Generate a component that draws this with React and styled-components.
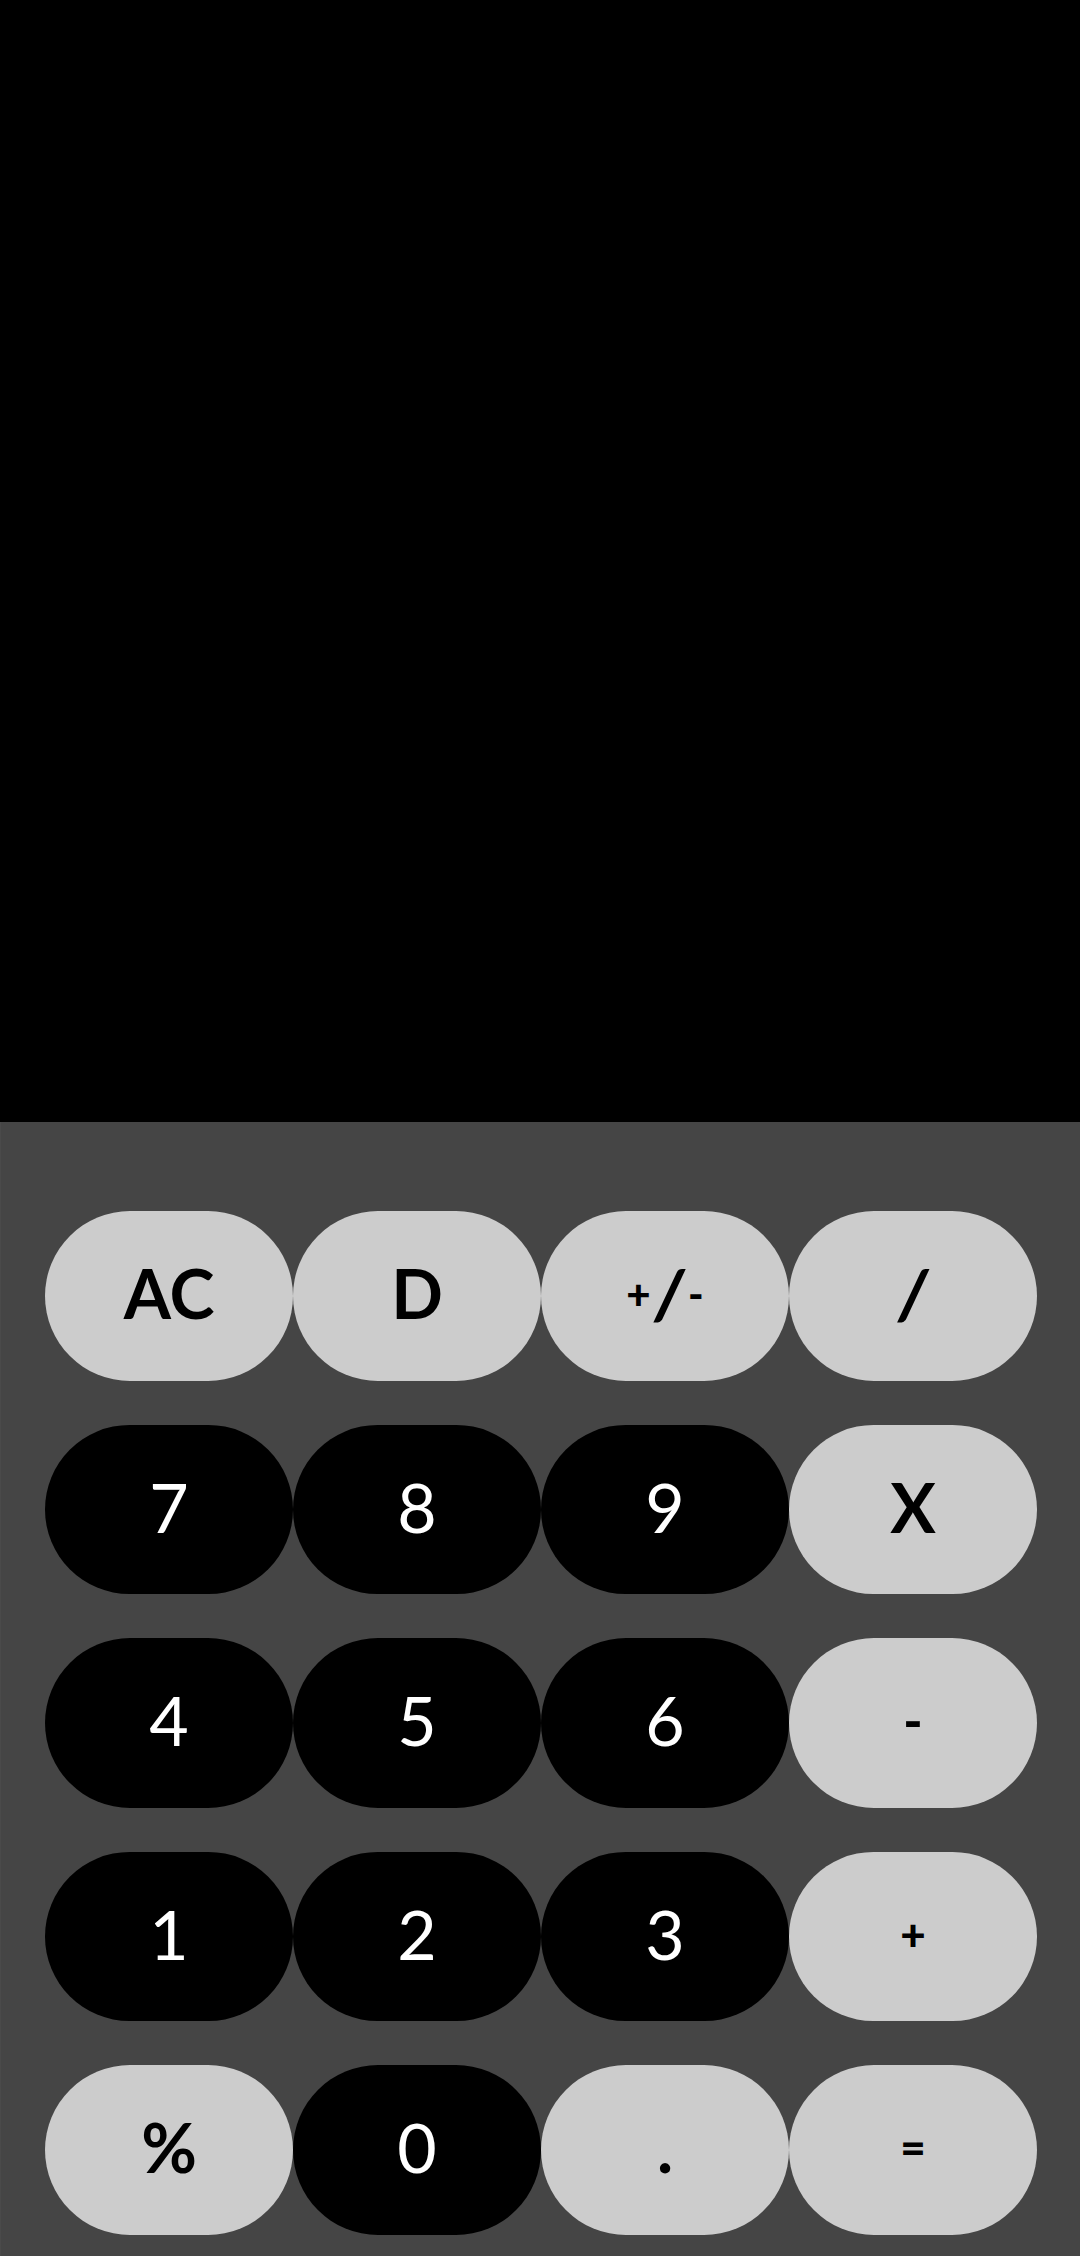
import React from "react";
import styled, { createGlobalStyle } from "styled-components";

const Global = createGlobalStyle`
  html, body { margin: 0; padding: 0; background: #000; }
  body { font-family: "Lato", "Noto Sans", sans-serif; }
  * { box-sizing: border-box; }
`;

const Page = styled.div`
  display: flex;
  flex-direction: column;
  width: 1080px;
  height: 2256px;
  overflow: hidden;
`;

const Screen = styled.div`
  height: 1122px;
  flex: none;
  background: #000;
`;

const Keypad = styled.div`
  flex: 1;
  background: #454545;
  border-left: 1px solid #4a4a4a;
  padding: 89px 43px 0 44px;
  display: grid;
  grid-template-columns: repeat(4, 248px);
  grid-auto-rows: 169.5px;
  row-gap: 44px;
`;

const Key = styled.button`
  border: none;
  margin: 0;
  padding: 0 0 5px;
  border-radius: 85px;
  display: flex;
  align-items: center;
  justify-content: center;
  font-family: "Lato", "Noto Sans", sans-serif;
  font-size: 68px;
  line-height: 1;
  background: ${(p) => (p.$tone === "light" ? "#cccccc" : "#000000")};
  color: ${(p) => (p.$tone === "light" ? "#000000" : "#ffffff")};
  font-weight: ${(p) => (p.$tone === "light" ? 700 : 400)};
`;

const Small = styled.span`
  font-size: ${(p) => p.$size || 44}px;
  font-weight: 900;
`;

const Slash = styled.span`
  font-style: italic;
  font-weight: 900;
  margin: 0 4px;
`;

const keys = [
  { label: "AC", tone: "light" },
  { label: "D", tone: "light" },
  { label: "pm", tone: "light" },
  { label: "/", tone: "light" },
  { label: "7", tone: "dark" },
  { label: "8", tone: "dark" },
  { label: "9", tone: "dark" },
  { label: "X", tone: "light" },
  { label: "4", tone: "dark" },
  { label: "5", tone: "dark" },
  { label: "6", tone: "dark" },
  { label: "-", tone: "light" },
  { label: "1", tone: "dark" },
  { label: "2", tone: "dark" },
  { label: "3", tone: "dark" },
  { label: "+", tone: "light" },
  { label: "%", tone: "light" },
  { label: "0", tone: "dark" },
  { label: ".", tone: "light" },
  { label: "=", tone: "light" },
];

function renderLabel(label) {
  if (label === "pm")
    return (
      <>
        <Small $size={42}>+</Small>
        <Slash>/</Slash>
        <Small $size={42}>-</Small>
      </>
    );
  if (label === "/") return <Slash>/</Slash>;
  if (label === "+" || label === "=") return <Small $size={44}>{label}</Small>;
  if (label === "-") return <Small $size={52}>-</Small>;
  return label;
}

export default function App() {
  return (
    <Page>
      <Global />
      <Screen />
      <Keypad>
        {keys.map((k) => (
          <Key key={k.label} $tone={k.tone}>
            {renderLabel(k.label)}
          </Key>
        ))}
      </Keypad>
    </Page>
  );
}
